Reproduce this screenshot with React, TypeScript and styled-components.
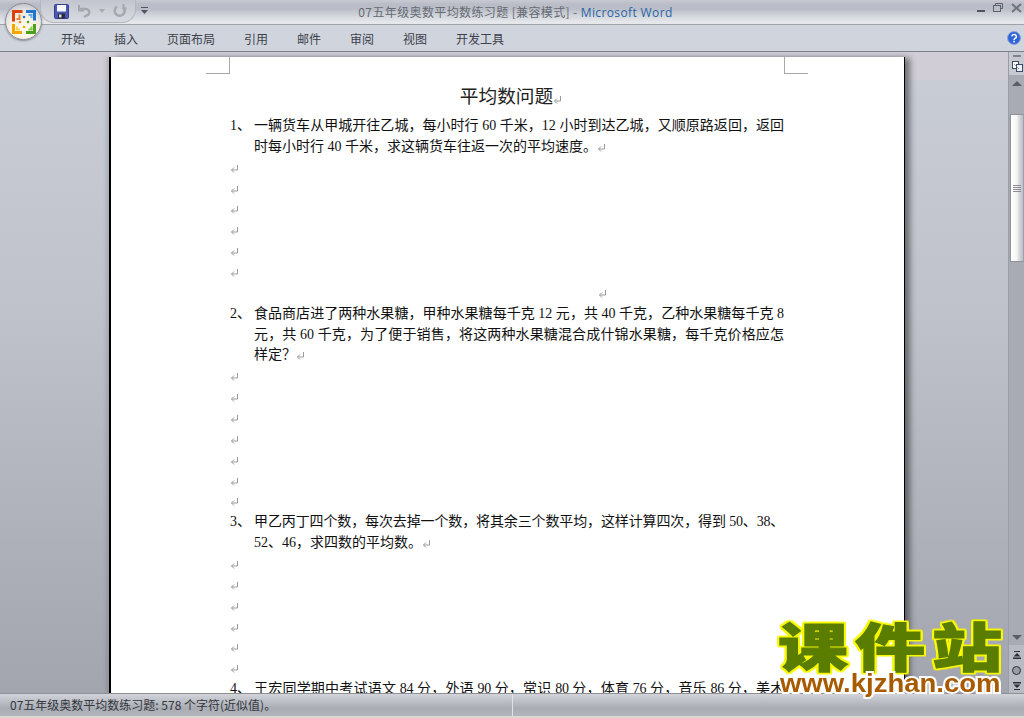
import React from "react";
import styled, { createGlobalStyle } from "styled-components";

const CJK = `"Noto Sans CJK SC", "Noto Sans", sans-serif`;
const DOC = `"Liberation Serif", "Noto Sans CJK SC", serif`;

const Global = createGlobalStyle`
  html, body { margin: 0; padding: 0; background: #fff; }
`;

const Window = styled.div`
  position: relative;
  width: 1024px;
  height: 718px;
  overflow: hidden;
  display: flex;
  flex-direction: column;
  font-family: ${CJK};
`;

const TitleBar = styled.header`
  position: relative;
  height: 24px;
  flex: none;
  display: flex;
  align-items: center;
  justify-content: center;
  background: linear-gradient(#c8c9d2 0, #babdc7 4px, #babdc7 9px, #ccd0d6 14px, #e5e7eb 22px);
  border-bottom: 1px solid #9fa3a8;
`;

const QuickAccess = styled.div`
  position: absolute;
  left: 40px;
  top: 0;
  width: 96px;
  height: 23px;
  box-sizing: border-box;
  padding-left: 13px;
  display: flex;
  align-items: center;
  gap: 8px;
  border: 1px solid #b3b6bd;
  border-top: none;
  border-radius: 0 0 14px 14px;
  background: linear-gradient(#c2c5ce, #d8dbe1);
`;

const Customize = styled.span`
  position: absolute;
  left: 141px;
  top: 7px;
  line-height: 0;
`;

const Title = styled.h1`
  margin: 0 0 0 7px;
  font-size: 12px;
  font-weight: 400;
  letter-spacing: 0.38px;
  color: #666b73;
  white-space: nowrap;
`;

const Brand = styled.span`
  color: #2a64a8;
  font-family: "Open Sans", sans-serif;
`;

const WindowButtons = styled.div`
  position: absolute;
  right: 2px;
  top: 3px;
  display: flex;
  gap: 8px;
  line-height: 0;
`;

const Ribbon = styled.nav`
  height: 27px;
  flex: none;
  box-sizing: border-box;
  padding-left: 61px;
  padding-right: 3px;
  display: flex;
  align-items: center;
  gap: 29px;
  background: #d0d4dd;
  border-bottom: 1px solid #7d8186;
`;

const Tab = styled.span`
  font-size: 12px;
  color: #3c414b;
`;

const Help = styled.span`
  margin-left: auto;
  line-height: 0;
`;

const Orb = styled.div`
  position: absolute;
  left: 5px;
  top: 3px;
  width: 37px;
  height: 37px;
  box-sizing: border-box;
  border-radius: 50%;
  display: flex;
  align-items: center;
  justify-content: center;
  background: radial-gradient(circle at 50% 72%, #fffdf4 0, #f7f1df 42%, #e4e4e6 62%, #c4c6cc 82%, #f2f2f4 100%);
  border: 1px solid #8b8e96;
  box-shadow: 0 1px 2px rgba(60, 60, 70, 0.5);
`;

const Main = styled.main`
  flex: 1;
  min-height: 0;
  display: flex;
  overflow: hidden;
`;

const Workspace = styled.div`
  flex: 1;
  box-sizing: border-box;
  padding: 5px 0 0 109px;
  overflow: hidden;
  background: linear-gradient(#d0cdd6 0, #d0cdd6 28px, #c8ccd4 28px, #bfc2ca 40%, #a2a5ad 100%);
`;

const Page = styled.article`
  position: relative;
  box-sizing: border-box;
  width: 796px;
  min-height: 700px;
  padding: 24px 120px 0 119px;
  background: #fff;
  border-left: 2px solid #000;
  border-right: 1px solid #000;
  color: #111;
  font-family: ${DOC};
  font-size: 14px;
  box-shadow: 6px 0 6px -1px rgba(0, 0, 0, 0.45), -3px 0 3px rgba(60, 60, 70, 0.18);
`;

const CropMark = styled.span<{ $side: "left" | "right" }>`
  position: absolute;
  top: 0;
  width: 23px;
  height: 16px;
  border-bottom: 1px solid #a8a8a8;
  ${(p) =>
    p.$side === "left"
      ? "left: 95px; border-right: 1px solid #a8a8a8;"
      : "right: 96px; border-left: 1px solid #a8a8a8;"}
`;

const Heading = styled.h2`
  margin: 0 0 8px;
  height: 27px;
  font-size: 18.67px;
  font-weight: 400;
  line-height: 27px;
  text-align: center;
  color: #222;
  font-family: ${CJK};
  padding-left: 8px;
`;

const Question = styled.div`
  display: flex;
`;

const Marker = styled.span`
  flex: none;
  width: 24px;
  line-height: 20.87px;
  white-space: nowrap;
`;

const Body = styled.div`
  flex: 1;
  min-width: 0;
`;

const TextLine = styled.div<{ $fill?: boolean; $tight?: boolean }>`
  height: 20.87px;
  line-height: 20.87px;
  text-align: justify;
  text-align-last: ${(p) => (p.$fill ? "justify" : "left")};
  letter-spacing: ${(p) => (p.$tight ? "-0.3px" : "0")};
`;

const BlankLine = styled.div<{ $indent?: number }>`
  height: 20.87px;
  line-height: 20.87px;
  padding-left: ${(p) => p.$indent ?? 0}px;
`;

const MarkIcon = styled.svg`
  display: inline-block;
  width: 9px;
  height: 9px;
  vertical-align: -1px;
`;

const ScrollBar = styled.aside`
  flex: none;
  width: 15px;
  display: flex;
  flex-direction: column;
  align-items: stretch;
  background: #a8abb3;
  border-left: 1px solid #9a9da5;
`;

const RulerToggle = styled.div`
  height: 23px;
  flex: none;
  box-sizing: border-box;
  padding: 3px 0 0 3px;
  background: #c6c9d1;
  line-height: 0;
`;

const Dash = styled.div`
  width: 8px;
  height: 2px;
  margin: 0 0 4px 1px;
  background: #7f838b;
`;

const ArrowButton = styled.div<{ $down?: boolean }>`
  height: 16px;
  flex: none;
  display: flex;
  justify-content: center;
  align-items: center;
  &::before {
    content: "";
    width: 0;
    height: 0;
    border-left: 5px solid transparent;
    border-right: 5px solid transparent;
    ${(p) =>
      p.$down ? "border-top: 5px solid #5a5e66;" : "border-bottom: 5px solid #5a5e66;"}
  }
`;

const TrackGap = styled.div<{ $grow?: boolean; $h?: number }>`
  flex: ${(p) => (p.$grow ? "1" : "none")};
  height: ${(p) => (p.$h ? `${p.$h}px` : "auto")};
`;

const Thumb = styled.div`
  height: 148px;
  flex: none;
  margin-left: 1px;
  box-sizing: border-box;
  display: flex;
  align-items: center;
  justify-content: center;
  background: linear-gradient(90deg, #fff 0, #f6f6f6 45%, #cfd2d9 75%, #bcbfc7 100%);
  border: 1px solid #8e9199;
  border-right-color: #9da0a8;
`;

const Grip = styled.div`
  width: 8px;
  height: 7px;
  background: repeating-linear-gradient(#8a8d94 0, #8a8d94 1px, transparent 1px, transparent 2px);
`;

const BrowseButtons = styled.div`
  height: 48px;
  flex: none;
  box-sizing: border-box;
  padding-top: 2px;
  display: flex;
  flex-direction: column;
  align-items: center;
  justify-content: space-around;
  background: #b8bbc3;
  line-height: 0;
`;

const Status = styled.footer`
  height: 23px;
  flex: none;
  display: flex;
  align-items: center;
  box-sizing: border-box;
  padding-left: 10px;
  border-top: 1px solid #8d9097;
  background: linear-gradient(#d2d4da 0, #c2c4cb 25%, #a9acb4 65%, #b2b5bc 100%);
`;

const StatusText = styled.span`
  width: 502px;
  font-size: 12px;
  color: #33363c;
  white-space: nowrap;
  line-height: 22px;
  border-right: 1px solid #e2e3e7;
`;

const BottomEdge = styled.div`
  height: 2px;
  flex: none;
  background: #dcd9d0;
`;

const Watermark = styled.div`
  position: absolute;
  left: 772px;
  top: 606px;
  width: 236px;
  display: flex;
  flex-direction: column;
  align-items: center;
`;

const WatermarkTitle = styled.div`
  font-family: ${CJK};
  font-size: 70px;
  font-weight: 900;
  line-height: 76px;
  letter-spacing: 7px;
  margin-right: -7px;
  white-space: nowrap;
  color: #5a7d00;
  -webkit-text-stroke: 1.5px #5a7d00;
  transform: scaleY(0.75);
  filter: drop-shadow(2px 0 0 #f8f800) drop-shadow(-2px 0 0 #f8f800) drop-shadow(0 2px 0 #f8f800)
    drop-shadow(0 -2px 0 #f8f800);
`;

const WatermarkUrl = styled.div`
  margin-top: -13px;
  font-family: "Liberation Sans", sans-serif;
  font-size: 25px;
  font-weight: 700;
  line-height: 28px;
  white-space: nowrap;
  color: #a85a00;
  -webkit-text-stroke: 4px #fff;
  paint-order: stroke fill;
  transform: scaleX(1.1);
`;

const Mark = () => (
  <MarkIcon viewBox="0 0 9 9" fill="none" stroke="#9a9a9a" strokeWidth="1">
    <path d="M7.5 1v5H1.5" />
    <path d="M4 3.5L1.5 6L4 8.5" />
  </MarkIcon>
);

const Blanks = ({ count }: { count: number }) => (
  <>
    {Array.from({ length: count }, (_, i) => (
      <BlankLine key={i}>
        <Mark />
      </BlankLine>
    ))}
  </>
);

const SaveIcon = () => (
  <svg width="15" height="15" viewBox="0 0 15 15">
    <rect x="0.5" y="0.5" width="14" height="14" rx="1" fill="#4a5ab4" stroke="#333f8c" />
    <rect x="3" y="1" width="9" height="6.5" fill="#f4f6fb" />
    <rect x="4" y="9.5" width="7" height="5" fill="#2a2a3a" />
    <rect x="5" y="10.5" width="2.5" height="3" fill="#d8dce8" />
  </svg>
);

const UndoIcon = () => (
  <svg width="14" height="14" viewBox="0 0 14 14" fill="none" stroke="#a5a8b0" strokeWidth="2.4">
    <path d="M3 5h5.5a3.2 3.2 0 0 1 1 6.5L7 13" />
    <path d="M2 1v5.5h5" strokeWidth="2" />
  </svg>
);

const RedoIcon = () => (
  <svg width="14" height="14" viewBox="0 0 14 14" fill="none" stroke="#a5a8b0" strokeWidth="2.6">
    <path d="M4 2.5a5 5 0 1 0 6 .5" />
    <path d="M10.5 0v4.5h3" strokeWidth="2" />
  </svg>
);

const OfficeLogo = () => (
  <svg width="24" height="24" viewBox="0 0 24 24" fill="none" strokeWidth="3">
    <path d="M10.5 1.5H1.5v10" stroke="#d9400a" />
    <path d="M4.5 9h3V4.5" stroke="#f08030" strokeWidth="2" />
    <path d="M14 1.5h8.5v9" stroke="#1f74cc" />
    <path d="M16.5 5h3v3" stroke="#62aae8" strokeWidth="2" />
    <path d="M1.5 14v8.5H10" stroke="#f5a500" />
    <path d="M5 16.5v3h3" stroke="#ffd050" strokeWidth="2" />
    <path d="M22.5 14v8.5H14" stroke="#4fa01f" />
    <path d="M19.5 16.5v3h-3" stroke="#86cc48" strokeWidth="2" />
    <g stroke="none">
      <circle cx="12" cy="7" r="1.3" fill="#1f74cc" />
      <circle cx="8" cy="12" r="1.3" fill="#f08030" />
      <circle cx="16" cy="12" r="1.3" fill="#4fa01f" />
      <circle cx="12" cy="17" r="1.3" fill="#f5a500" />
    </g>
  </svg>
);

const HelpIcon = () => (
  <svg width="14" height="14" viewBox="0 0 14 14">
    <circle cx="7" cy="7" r="6.5" fill="#2f63d8" stroke="#8fa6d8" />
    <path d="M4.8 5.4a2.3 2 0 1 1 3.2 2c-.7.4-1 .7-1 1.5" fill="none" stroke="#fff" strokeWidth="1.5" />
    <rect x="6.2" y="9.8" width="1.6" height="1.6" fill="#fff" />
  </svg>
);

const DocMapIcon = () => (
  <svg width="11" height="11" viewBox="0 0 11 11">
    <rect x="0.5" y="0.5" width="6" height="7" fill="#fff" stroke="#3c4a6a" />
    <rect x="4.5" y="3.5" width="6" height="7" fill="#eef0f5" stroke="#3c4a6a" />
    <path d="M2 3l5 5" stroke="#7a8296" strokeDasharray="1 1" />
  </svg>
);

const App = () => (
  <Window>
    <Global />
    <TitleBar>
      <QuickAccess>
        <SaveIcon />
        <UndoIcon />
        <svg width="6" height="4" viewBox="0 0 6 4">
          <path d="M0 0h6L3 4z" fill="#a5a8b0" />
        </svg>
        <RedoIcon />
      </QuickAccess>
      <Customize>
        <svg width="7" height="7" viewBox="0 0 7 7">
          <path d="M0 0h7v1H0zM0 3h7L3.5 7z" fill="#50545c" />
        </svg>
      </Customize>
      <Title>
        07五年级奥数平均数练习题 [兼容模式] - <Brand>Microsoft Word</Brand>
      </Title>
      <WindowButtons>
        <svg width="8" height="9" viewBox="0 0 8 9">
          <rect y="7" width="8" height="2" fill="#50545c" />
        </svg>
        <svg width="10" height="9" viewBox="0 0 10 9" fill="none" stroke="#5c6068">
          <rect x="0.5" y="2.5" width="7" height="6" />
          <path d="M2.5 2V.5h7v5H8" />
        </svg>
        <svg width="11" height="10" viewBox="0 0 11 10" fill="none" stroke="#70747c" strokeWidth="2">
          <path d="M1 1l9 8M10 1l-9 8" />
        </svg>
      </WindowButtons>
    </TitleBar>

    <Ribbon>
      <Tab>开始</Tab>
      <Tab>插入</Tab>
      <Tab>页面布局</Tab>
      <Tab>引用</Tab>
      <Tab>邮件</Tab>
      <Tab>审阅</Tab>
      <Tab>视图</Tab>
      <Tab>开发工具</Tab>
      <Help>
        <HelpIcon />
      </Help>
    </Ribbon>

    <Orb>
      <OfficeLogo />
    </Orb>

    <Main>
      <Workspace>
        <Page>
          <CropMark $side="left" />
          <CropMark $side="right" />
          <Heading>
            平均数问题
            <Mark />
          </Heading>

          <Question>
            <Marker>1、</Marker>
            <Body>
              <TextLine $fill>一辆货车从甲城开往乙城，每小时行 60 千米，12 小时到达乙城，又顺原路返回，返回</TextLine>
              <TextLine>
                时每小时行 40 千米，求这辆货车往返一次的平均速度。
                <Mark />
              </TextLine>
            </Body>
          </Question>
          <Blanks count={6} />
          <BlankLine $indent={368}>
            <Mark />
          </BlankLine>

          <Question>
            <Marker>2、</Marker>
            <Body>
              <TextLine $fill>食品商店进了两种水果糖，甲种水果糖每千克 12 元，共 40 千克，乙种水果糖每千克 8</TextLine>
              <TextLine $fill>元，共 60 千克，为了便于销售，将这两种水果糖混合成什锦水果糖，每千克价格应怎</TextLine>
              <TextLine>
                样定？
                <Mark />
              </TextLine>
            </Body>
          </Question>
          <Blanks count={7} />

          <Question>
            <Marker>3、</Marker>
            <Body>
              <TextLine $fill $tight>甲乙丙丁四个数，每次去掉一个数，将其余三个数平均，这样计算四次，得到 50、38、</TextLine>
              <TextLine>
                52、46，求四数的平均数。
                <Mark />
              </TextLine>
            </Body>
          </Question>
          <Blanks count={6} />

          <Question>
            <Marker>4、</Marker>
            <Body>
              <TextLine $fill $tight>王宏同学期中考试语文 84 分，外语 90 分，常识 80 分，体育 76 分，音乐 86 分，美术</TextLine>
            </Body>
          </Question>
        </Page>
      </Workspace>

      <ScrollBar>
        <RulerToggle>
          <Dash />
          <DocMapIcon />
        </RulerToggle>
        <ArrowButton />
        <TrackGap $h={23} />
        <Thumb>
          <Grip />
        </Thumb>
        <TrackGap $grow />
        <ArrowButton $down />
        <BrowseButtons>
          <svg width="8" height="8" viewBox="0 0 8 8">
            <path d="M1 0h6v1H1zM4 2l3.5 3.5h-7zM0 6.5h8V8H0z" fill="#2c2e33" />
          </svg>
          <svg width="9" height="9" viewBox="0 0 9 9">
            <circle cx="4.5" cy="4.5" r="4" fill="#9a9da4" stroke="#2c2e33" />
          </svg>
          <svg width="8" height="8" viewBox="0 0 8 8">
            <path d="M0 0h8v1.5H0zM.5 2.5h7L4 6zM1 7h6v1H1z" fill="#2c2e33" />
          </svg>
        </BrowseButtons>
      </ScrollBar>
    </Main>

    <Status>
      <StatusText>07五年级奥数平均数练习题: 578 个字符(近似值)。</StatusText>
    </Status>
    <BottomEdge />

    <Watermark>
      <WatermarkTitle>课件站</WatermarkTitle>
      <WatermarkUrl>www.kjzhan.com</WatermarkUrl>
    </Watermark>
  </Window>
);

export default App;
